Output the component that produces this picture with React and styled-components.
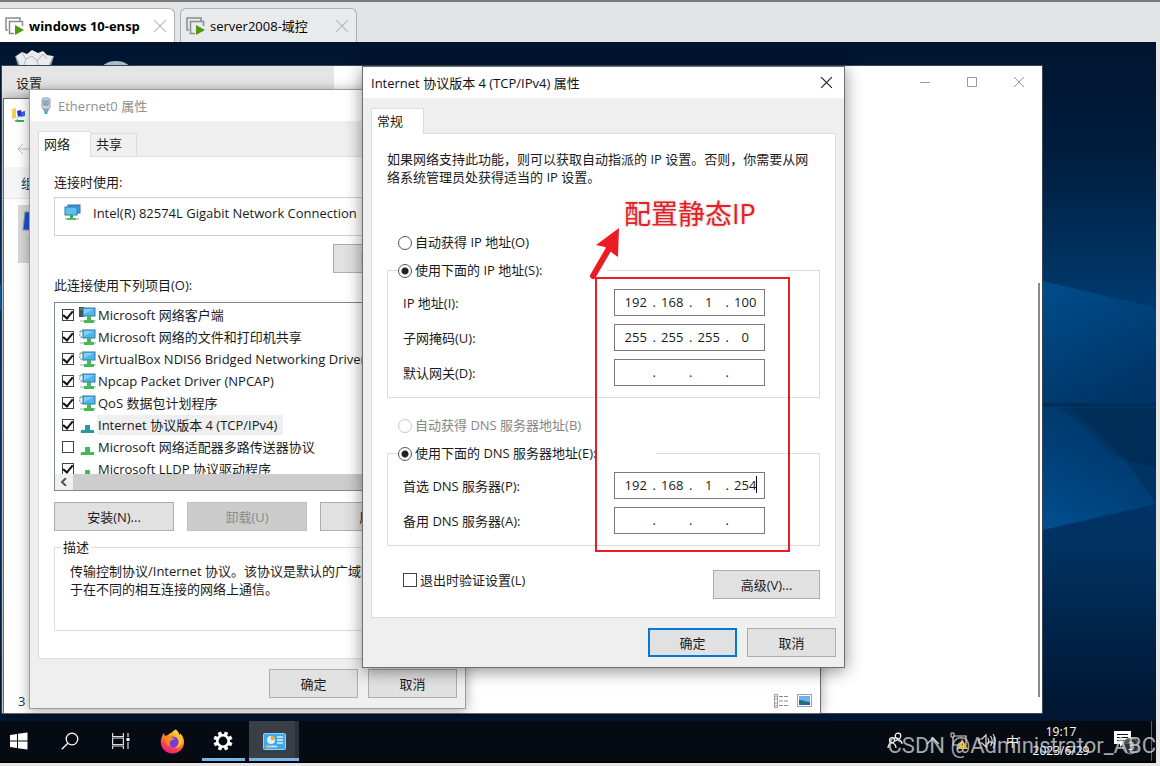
import React from 'react';
import styled, { createGlobalStyle, css } from 'styled-components';

const GlobalStyle = createGlobalStyle`
  * {
    box-sizing: border-box;
  }

  body {
    margin: 0;
    background: #e3e4e6;
  }

  body, button, input {
    font-family: 'Open Sans', 'Noto Sans CJK SC', sans-serif;
    font-size: 13px;
    line-height: 18px;
    color: #1a1a1a;
  }
`;

/* ---------- VM tab strip ---------- */

const Page = styled.div`
  display: flex;
  flex-direction: column;
  height: 100vh;
  overflow: hidden;
  padding: 0 4px 3px 0;
  background: #e6e6e7;
`;

const TabStrip = styled.nav`
  display: flex;
  align-items: flex-end;
  gap: 5px;
  height: 42px;
  flex: none;
  margin-right: -4px;
  background: #e3e4e6;
  box-shadow: inset 0 2px 0 #77797b;
`;

const VmTab = styled.div`
  display: flex;
  align-items: center;
  gap: 5px;
  width: ${({ $active }) => ($active ? '175px' : '177px')};
  height: 34px;
  padding: 0 7px 0 5px;
  border: 1px solid #adafb1;
  border-bottom: 0;
  border-left-width: ${({ $active }) => ($active ? '0' : '1px')};
  border-radius: ${({ $active }) => ($active ? '0 6px 0 0' : '6px 6px 0 0')};
  background: ${({ $active }) => ($active ? '#fff' : '#e9eaec')};
`;

const VmTabTitle = styled.a`
  flex: 1;
  color: #000;
  font-size: 13px;
  font-weight: ${({ $active }) => ($active ? 700 : 400)};
  text-decoration: none;
  white-space: nowrap;
`;

const IconButton = styled.button`
  display: flex;
  align-items: center;
  justify-content: center;
  padding: 0;
  border: 0;
  background: none;
  color: ${({ $color }) => $color || '#1a1a1a'};
`;

/* ---------- Desktop and windows ---------- */

const Desktop = styled.main`
  position: relative;
  display: flex;
  flex-direction: column;
  justify-content: flex-end;
  flex: 1;
  min-height: 0;
  overflow: hidden;
  background: #001a38;
`;

const Wallpaper = styled.svg`
  position: absolute;
  inset: 0;
  width: 100%;
  height: 100%;
`;

const DesktopIcons = styled.svg`
  position: absolute;
  left: 14px;
  top: 7px;
`;

const Window = styled.section`
  position: absolute;
  left: ${({ $x }) => $x}px;
  top: ${({ $y }) => $y}px;
  width: ${({ $w }) => $w}px;
  border: 1px solid ${({ $border }) => $border || '#8a8a8a'};
  background: ${({ $bg }) => $bg || '#fff'};
  box-shadow: ${({ $shadow }) => $shadow || 'none'};
`;

const SettingsBody = styled.div`
  display: flex;
  justify-content: space-between;
  height: 647px;
  background: linear-gradient(90deg, #e5e5e5 332px, #fff 332px);
`;

const SettingsTitle = styled.h2`
  margin: 0;
  padding: 8px 14px;
  font-size: 13px;
  font-weight: 400;
`;

const SettingsSide = styled.div`
  display: flex;
  flex-direction: column;
  justify-content: space-between;
  align-items: flex-end;
  padding-bottom: 16px;
`;

const CaptionButtons = styled.div`
  display: flex;
  padding-top: 8px;

  button {
    width: 47px;
    height: 16px;
  }
`;

const ScrollThumb = styled.div`
  width: 2px;
  height: 414px;
  margin-right: 2px;
  background: #8b8b8b;
`;

const ExplorerBody = styled.div`
  display: flex;
  flex-direction: column;
  height: 614px;
`;

const ExplorerRow = styled.div`
  display: flex;
  align-items: center;
  flex: none;
  height: ${({ $h }) => $h}px;
  padding: 0 7px;
`;

const ExplorerBar = styled(ExplorerRow)`
  padding: 0 17px;
  border-bottom: 1px solid #e3e6ea;
  background: #f5f6f8;
  color: #1e395b;
`;

const ConnectionTile = styled.div`
  display: flex;
  align-items: flex-start;
  width: 200px;
  height: 58px;
  margin: 6px 0 0 14px;
  padding: 6px 4px;
  background: #d9d9d9;
`;

const StatusBar = styled.div`
  display: flex;
  align-items: center;
  justify-content: space-between;
  height: 24px;
  margin-top: auto;
  padding: 0 8px 0 14px;
  color: #1e395b;
`;

const ViewIcons = styled.div`
  display: flex;
  gap: 8px;
`;

const TitleBar = styled.header`
  display: flex;
  align-items: center;
  gap: 4px;
  height: 31px;
  padding: 0 11px 0 8px;
  background: #fff;
  color: ${({ $inactive }) => ($inactive ? '#8f8f8f' : '#111')};

  h2 {
    flex: 1;
    margin: 0;
    font-size: 13px;
    font-weight: 400;
  }
`;

const DialogBody = styled.div`
  padding: 10px 8px;
  background: #efefef;
`;

const TabList = styled.div`
  display: flex;
  align-items: flex-end;
  height: 25px;
`;

const DialogTab = styled.button`
  z-index: 1;
  width: ${({ $active }) => ($active ? '53px' : '46px')};
  height: ${({ $active }) => ($active ? '26px' : '23px')};
  margin-bottom: ${({ $active }) => ($active ? '-1px' : '0')};
  padding: 0 0 2px 5px;
  border: 1px solid #dcdcdc;
  border-bottom: 0;
  border-left-width: ${({ $active }) => ($active ? '1px' : '0')};
  background: ${({ $active }) => ($active ? '#fff' : '#f0f0f0')};
  text-align: left;
`;

const Panel = styled.div`
  padding: 16px 15px ${({ $bottom }) => $bottom}px;
  border: 1px solid #dcdcdc;
  background: #fff;
`;

const Footer = styled.footer`
  display: flex;
  justify-content: flex-end;
  gap: 10px;
  margin-top: 10px;
`;

const Button = styled.button`
  width: ${({ $w }) => $w || 89}px;
  height: 29px;
  padding: 0;
  border: 1px solid #adadad;
  background: #e1e1e1;
  overflow: hidden;

  ${({ $primary }) => $primary && css`
    border: 2px solid #0078d7;
  `}

  &:disabled {
    border-color: #bfbfbf;
    background: #ccc;
    color: #8b8b8b;
  }
`;

const Text = styled.p`
  margin: ${({ $top }) => $top || 0}px 0 0;
  white-space: nowrap;
`;

/* ---------- Ethernet0 dialog ---------- */

const AdapterBox = styled.div`
  display: flex;
  gap: 12px;
  height: 39px;
  margin-top: 6px;
  padding: 6px 9px;
  border: 1px solid #cfcfcf;
  white-space: nowrap;
`;

const ConfigureRow = styled.div`
  display: flex;
  justify-content: flex-end;
  margin-top: 8px;
`;

const ItemBox = styled.div`
  display: flex;
  flex-direction: column;
  height: 189px;
  margin-top: 8px;
  border: 1px solid #828790;
`;

const ItemList = styled.ul`
  flex: 1;
  min-height: 0;
  margin: 0;
  padding: 1px 0 0 7px;
  overflow: hidden;
  list-style: none;
`;

const Item = styled.li`
  display: flex;
  align-items: center;
  height: 22px;
  white-space: nowrap;

  label {
    display: flex;
    align-items: center;
  }

  svg {
    margin: 0 1px 0 5px;
  }

  span {
    padding: 1px 6px 1px 1px;
    background: ${({ $selected }) => ($selected ? '#efefef' : 'none')};
  }
`;

const ScrollBar = styled.div`
  display: flex;
  height: 16px;
  background: #f0f0f0;

  button {
    width: 18px;
  }

  div {
    flex: 1;
    background: #cdcdcd;
  }
`;

const ActionRow = styled.div`
  display: flex;
  gap: 13px;
  margin-top: 11px;
`;

const DescriptionGroup = styled.fieldset`
  margin: 7px 0 0;
  padding: 6px 15px 32px;
  border: 1px solid #dcdcdc;

  legend {
    margin-left: -9px;
    padding: 0 2px;
  }
`;

/* ---------- TCP/IPv4 dialog ---------- */

const Check = styled.input.attrs({ type: 'checkbox' })`
  appearance: none;
  display: grid;
  place-items: center;
  flex: none;
  width: ${({ $size }) => $size || 12}px;
  height: ${({ $size }) => $size || 12}px;
  margin: 0;
  border: 1px solid #444;
  background: #fff;

  &:checked::after {
    content: '';
    width: 4px;
    height: 8px;
    margin-top: -2px;
    border: solid #111;
    border-width: 0 2px 2px 0;
    transform: rotate(40deg);
  }
`;

const Radio = styled.input.attrs({ type: 'radio' })`
  appearance: none;
  flex: none;
  width: 14px;
  height: 14px;
  margin: 2px 0 0;
  border: 1px solid #555;
  border-radius: 50%;
  background: #fff;

  &:checked {
    background: radial-gradient(circle, #222 3px, #fff 4px);
  }

  &:disabled {
    border-color: #c8c8c8;
  }
`;

const Choice = styled.label`
  display: flex;
  align-items: center;
  gap: 3px;
  height: 20px;
  margin-top: ${({ $top }) => $top || 0}px;
  padding-left: ${({ $indent }) => $indent || 0}px;
  color: ${({ $disabled }) => ($disabled ? '#858585' : '#1a1a1a')};
  white-space: nowrap;
`;

const AddressGroup = styled.fieldset`
  display: flex;
  flex-direction: column;
  gap: 8px;
  margin: 8px 0 0;
  padding: 9px 15px 11px;
  border: 1px solid #dcdcdc;

  legend {
    width: ${({ $legend }) => $legend}px;
    margin-left: -5px;
    padding: 0;
  }
`;

const Field = styled.div`
  display: grid;
  grid-template-columns: 211px 151px;
  align-items: center;
`;

const IpBox = styled.div`
  position: relative;
  display: flex;
  height: 27px;
  padding: 2px 2px 3px 4px;
  border: 1px solid #7a7a7a;
  background: #fff;

  span {
    width: 3px;
    text-align: center;
    line-height: 21px;
  }
`;

const Octet = styled.input`
  flex: 1;
  min-width: 0;
  padding: 0;
  border: 0;
  outline: 0;
  background: none;
  text-align: center;
`;

const Caret = styled.i`
  position: absolute;
  top: 3px;
  right: 7px;
  width: 1px;
  height: 17px;
  background: #000;
`;

const BottomRow = styled.div`
  display: flex;
  justify-content: space-between;
  margin-top: 24px;
`;

/* ---------- Red marks over the dialogs ---------- */

const MarkBox = styled.div`
  position: absolute;
  left: 595px;
  top: 235px;
  width: 195px;
  height: 275px;
  border: 2px solid #ed1c24;
`;

const MarkArrow = styled.svg`
  position: absolute;
  left: 585px;
  top: 183px;
`;

const MarkText = styled.div`
  position: absolute;
  left: 624px;
  top: 153px;
  color: #ed1c24;
  font-size: 27px;
  line-height: 38px;
  text-shadow: 0 0 3px #bbb;
`;

/* ---------- Taskbar ---------- */

const Taskbar = styled.div`
  position: relative;
  display: flex;
  gap: 1px;
  height: 42px;
  flex: none;
  border-bottom: 2px solid #000;
  background: #060b13;
`;

const TaskButton = styled.button`
  display: flex;
  align-items: center;
  justify-content: center;
  width: ${({ $start }) => ($start ? 38 : 50)}px;
  margin-right: ${({ $start }) => ($start ? 6 : 0)}px;
  padding: 0;
  border: 0;
  background: none;

  ${({ $open }) => $open && css`
    background: linear-gradient(#76b9ed, #76b9ed) center bottom / 43px 3px no-repeat;
  `}

  ${({ $active }) => $active && css`
    background: linear-gradient(90deg, #3a3e45 46px, #2c3037 46px);
    box-shadow: inset 0 -3px 0 #76b9ed;
  `}
`;

const Tray = styled.div`
  display: flex;
  align-items: center;
  margin-left: auto;
  gap: 10px;
  color: #fff;
`;

const Clock = styled.time`
  width: 64px;
  margin-right: 9px;
  font-size: 12px;
  line-height: 19px;
  text-align: center;
`;

const ShowDesktop = styled.button`
  width: 5px;
  height: 100%;
  margin-left: 1px;
  padding: 0;
  border: 0;
  border-left: 1px solid #555a60;
  background: none;
`;

const Watermark = styled.div`
  position: absolute;
  right: 0;
  bottom: 0;
  color: rgba(220, 220, 220, 0.75);
  font-family: Roboto, sans-serif;
  font-size: 22px;
  line-height: 30px;
  white-space: nowrap;
`;

/* ---------- Icons ---------- */

const VmIcon = () => (
  <svg width="19" height="18" viewBox="0 0 19 18">
    <path d="M3 13H1V1h14v3" fill="none" stroke="#8b8b8b" strokeWidth="1.5" />
    <path d="M9 16.5H4.5v-12h13V9" fill="none" stroke="#8b8b8b" strokeWidth="1.5" />
    <path d="M10 8l9 5-9 5z" fill="#4a9a12" />
  </svg>
);

const Cross = ({ size = 12, width = 1 }) => (
  <svg width={size} height={size} viewBox="0 0 12 12" stroke="currentColor" strokeWidth={width}>
    <path d="M1 1l10 10M11 1L1 11" />
  </svg>
);

const EthernetIcon = () => (
  <svg width="16" height="18" viewBox="0 0 16 18">
    <rect x="4" y="1" width="8" height="11" rx="2" fill="#c9d3de" stroke="#8fa0b3" />
    <path d="M6 3v5h4V3M8 3v4" fill="none" stroke="#6d7f95" />
    <path d="M5 12h6l-1 3H6z" fill="#7fa7c4" />
    <path d="M6.500 15h3v2h-3z" fill="#35b0d6" />
  </svg>
);

const AdapterIcon = () => (
  <svg width="17" height="17" viewBox="0 0 17 17">
    <rect x="4" y="1" width="12" height="8" fill="#3f9fdb" stroke="#2d6f9f" />
    <rect x="1" y="3" width="12" height="8" fill="#5cc0f5" stroke="#3579a5" />
    <path d="M6 11h3v3H6z" fill="#37a64b" />
    <path d="M3 14h9v2H3z" fill="#49c45c" />
    <path d="M1 14h2v2H1zM12 14h3v2h-3z" fill="#c9cfd4" />
  </svg>
);

const ServiceIcon = ({ client }) => (
  <svg width="17" height="18" viewBox="0 0 17 18">
    {client ? (
      <path d="M0 1h5v10H0z" fill="#4b5257" />
    ) : (
      <circle cx="4" cy="6" r="3.500" fill="none" stroke="#a9b1b8" strokeWidth="2" strokeDasharray="2 1" />
    )}
    <path d="M1 3h3" stroke="#54c06a" />
    <rect x="4" y="2" width="12" height="8" fill="#4db5f2" stroke="#3579a5" />
    <path d="M5 3h10L5 8z" fill="#7fd0fb" />
    <path d="M8 10h4v4H8z" fill="#46b857" />
    <path d="M5 14h10v3H5z" fill="#46b857" />
    <path d="M1 14h4v2H1zM15 14h2v2h-2z" fill="#d0d4d8" />
  </svg>
);

const ProtocolIcon = ({ color }) => (
  <svg width="17" height="18" viewBox="0 0 17 18">
    <path d="M6 9h5v5H6z" fill={color} />
    <path d="M2 14h13v3H2z" fill={color} />
    <path d="M1 16h15" stroke={color} strokeOpacity="0.500" />
  </svg>
);

const DotIcon = () => (
  <svg width="17" height="18" viewBox="0 0 17 18">
    <rect x="6" y="10" width="5" height="5" rx="1" fill="#46b857" />
  </svg>
);

const NetworkFolderIcon = () => (
  <svg width="16" height="16" viewBox="0 0 16 16">
    <path d="M1 2l4-1v10l-4 1z" fill="#efd05b" />
    <path d="M6 4l4-1 1 6-4 1z" fill="#1b33c8" />
    <path d="M5 10l6-1 1 1-6 1z" fill="#c3cbd8" />
    <path d="M10 5l4-1v5l-4 1z" fill="#3c63e6" />
    <path d="M3 14l4-2v1h6v2H7z" fill="#2fae55" />
  </svg>
);

const ListViewIcon = () => (
  <svg width="16" height="14" viewBox="0 0 16 14">
    <path d="M1.500 .5h3v13h-3zM1.500 5h3M1.500 9h3" fill="none" stroke="#9b9b9b" />
    <path d="M6 2.500h4m1 0h4M6 7h4m1 0h4M6 11.500h4m1 0h4" stroke="#8b8b8b" />
    <path d="M2.500 2h1v1h-1zM2.500 11h1v1h-1z" fill="#c0392b" />
  </svg>
);

const ThumbViewIcon = () => (
  <svg width="15" height="13" viewBox="0 0 15 13">
    <rect x=".5" y=".5" width="14" height="12" fill="#fff" stroke="#9aa5b0" />
    <path d="M2 2h11v9H2z" fill="#69b4ee" />
    <path d="M2 6c4 0 7 2 11 2v3H2z" fill="#276b7c" />
    <path d="M2 10h11v1H2z" fill="#2b63a8" />
  </svg>
);

const StartIcon = () => (
  <svg width="18" height="18" viewBox="0 0 18 18" fill="#fff">
    <path d="M0 3l7-1v6.500H0zM8 1.800L17.500 .5v8H8zM0 9.500h7V16l-7-1zM8 9.500h9.500v8L8 16.200z" />
  </svg>
);

const SearchIcon = () => (
  <svg width="18" height="18" viewBox="0 0 18 18" fill="none" stroke="#fff" strokeWidth="1.300">
    <circle cx="11" cy="7" r="5.800" />
    <path d="M6.800 11.200L.8 17.200" />
  </svg>
);

const TaskViewIcon = () => (
  <svg width="18" height="18" viewBox="0 0 18 18" fill="none" stroke="#ddd" strokeWidth="1.200">
    <path d="M.6 1v3.500h10.800V1M.6 6v6.500h10.800V6zM.6 17v-3h10.800v3M16 1v4M16 10v7" />
    <path d="M14.500 6h3v3h-3z" fill="#fff" stroke="none" />
  </svg>
);

const FirefoxIcon = () => (
  <svg width="25" height="25" viewBox="0 0 25 25">
    <defs>
      <linearGradient id="ff" x1="0.800" y1="0" x2="0.300" y2="1">
        <stop offset="0" stopColor="#fff04a" />
        <stop offset="0.400" stopColor="#ff9420" />
        <stop offset="0.750" stopColor="#ff3c4f" />
        <stop offset="1" stopColor="#e01f8d" />
      </linearGradient>
    </defs>
    <path d="M16 .5c2 2 3 3.500 3.500 5.500l1-1.500c2.500 3 3.800 6 3.500 9.500C23.500 20 18.500 24.500 12.500 24.500S1 20 .8 13.500C.6 10 2 6.500 4 4l.8 3L8 6c1-1 2-2 4-2.500C13 2 14 1 16 .5z" fill="url(#ff)" />
    <circle cx="13" cy="13" r="5.500" fill="#6b3fe0" />
    <path d="M4 8c3-2 6-1 8 .5l3 1.500c-2 1-4 1-5 2.500-1 2 0 4 2 5-4 0-6.500-3-6.500-6z" fill="#ff8a1e" />
    <path d="M14 5c3 1 5 4 5 8 0 3-2 5-4 6 5 0 7-4 7-8-1-3-4-6-8-6z" fill="#ffc52f" />
  </svg>
);

const teeth = [0, 45, 90, 135, 180, 225, 270, 315];

const GearIcon = () => (
  <svg width="20" height="20" viewBox="0 0 20 20" fill="#fff">
    <circle cx="10" cy="10" r="5.700" fill="none" stroke="#fff" strokeWidth="2.600" />
    {teeth.map((angle) => (
      <rect key={angle} x="8.200" y="0.500" width="3.600" height="3.500" transform={`rotate(${angle + 22} 10 10)`} />
    ))}
  </svg>
);

const ControlPanelIcon = () => (
  <svg width="23" height="17" viewBox="0 0 23 17">
    <rect x=".5" y=".5" width="22" height="16" rx="1" fill="#3fa9ec" stroke="#8bd3fb" />
    <circle cx="8" cy="7" r="4" fill="#d9f0fd" />
    <path d="M8 7V3a4 4 0 0 1 4 4z" fill="#f6a623" />
    <path d="M14 4h6M14 7h6M14 10h6M4 13.500h10" stroke="#d9f0fd" strokeWidth="1.500" />
    <path d="M3 13.500h5" stroke="#f6c15a" strokeWidth="1.500" />
  </svg>
);

const PeopleIcon = () => (
  <svg width="16" height="18" viewBox="0 0 16 18" fill="none" stroke="#fff" strokeWidth="1.200">
    <circle cx="11" cy="4" r="2.800" />
    <circle cx="5" cy="8" r="2.500" />
    <path d="M1 16c0-3 2-5 4-5s4 2 4 5M8 9c3-2 7-1 7 3" />
  </svg>
);

const ChevronIcon = () => (
  <svg width="27" height="10" viewBox="0 0 27 10" fill="none" stroke="#ddd" strokeWidth="1.200">
    <path d="M14 8l6-6 6 6" />
  </svg>
);

const NetworkWarnIcon = () => (
  <svg width="18" height="18" viewBox="0 0 18 18">
    <path d="M3 4h13v9H3zM7 16h5" fill="none" stroke="#ddd" strokeWidth="1.200" />
    <path d="M1 1h3v4H1z" fill="#060b13" stroke="#ddd" />
    <path d="M12 7l6 10H7z" fill="#f5b921" />
    <path d="M12.500 11v3M12.500 15v1" stroke="#222" />
  </svg>
);

const VolumeIcon = () => (
  <svg width="18" height="16" viewBox="0 0 18 16" fill="none" stroke="#ddd" strokeWidth="1.200">
    <path d="M1 6h3l4-4v12l-4-4H1zM10 5c1 2 1 4 0 6M12.500 3c2 3 2 7 0 10M15 1c3 4 3 10 0 14" />
  </svg>
);

const NoticeIcon = () => (
  <svg width="28" height="28" viewBox="0 0 28 28">
    <path d="M2 4h17v13h-8l-3 3v-3H2z" fill="#fff" />
    <path d="M5 7.500h11M5 10.500h11M5 13.500h7" stroke="#111" />
    <circle cx="18.500" cy="19" r="8" fill="#33373d" fillOpacity="0.850" stroke="#8a8d91" />
    <text x="16" y="23" fontSize="11" fill="#fff">3</text>
  </svg>
);

/* ---------- Parts ---------- */

const IpField = ({ id, label, octets = ['', '', '', ''], focused }) => (
  <Field>
    <label htmlFor={id}>{label}</label>
    <IpBox>
      {octets.map((octet, i) => (
        <React.Fragment key={i}>
          {i > 0 && <span>.</span>}
          <Octet id={i === 0 ? id : undefined} aria-label={`${label} ${i + 1}`} defaultValue={octet} />
        </React.Fragment>
      ))}
      {focused && <Caret />}
    </IpBox>
  </Field>
);

const items = [
  { name: 'Microsoft 网络客户端', checked: true, icon: <ServiceIcon client /> },
  { name: 'Microsoft 网络的文件和打印机共享', checked: true, icon: <ServiceIcon /> },
  { name: 'VirtualBox NDIS6 Bridged Networking Driver', checked: true, icon: <ServiceIcon /> },
  { name: 'Npcap Packet Driver (NPCAP)', checked: true, icon: <ServiceIcon /> },
  { name: 'QoS 数据包计划程序', checked: true, icon: <ServiceIcon /> },
  { name: 'Internet 协议版本 4 (TCP/IPv4)', checked: true, selected: true, icon: <ProtocolIcon color="#2a9aa0" /> },
  { name: 'Microsoft 网络适配器多路传送器协议', checked: false, icon: <ProtocolIcon color="#46b857" /> },
  { name: 'Microsoft LLDP 协议驱动程序', checked: true, icon: <DotIcon /> },
];

const SettingsWindow = () => (
  <Window $x={1} $y={23} $w={1042} $border="#3b4654">
    <SettingsBody>
      <SettingsTitle>设置</SettingsTitle>
      <SettingsSide>
        <CaptionButtons>
          <IconButton $color="#999" aria-label="最小化">
            <svg width="12" height="12" stroke="currentColor"><path d="M1 6.500h10" /></svg>
          </IconButton>
          <IconButton $color="#999" aria-label="最大化">
            <svg width="12" height="12" fill="none" stroke="currentColor"><path d="M1.500 1.500h9v9h-9z" /></svg>
          </IconButton>
          <IconButton $color="#999" aria-label="关闭"><Cross /></IconButton>
        </CaptionButtons>
        <ScrollThumb />
      </SettingsSide>
    </SettingsBody>
  </Window>
);

const ConnectionsWindow = () => (
  <Window $x={3} $y={56} $w={818} $border="#6b6b6b" $shadow="0 0 12px rgba(0, 0, 0, 0.35)">
    <ExplorerBody>
      <ExplorerRow $h={31}><NetworkFolderIcon /></ExplorerRow>
      <ExplorerRow $h={37}>
        <svg width="20" height="12" viewBox="-6 0 20 12" fill="none" stroke="#bbb"><path d="M14 6H1M6 1L1 6l5 5" /></svg>
      </ExplorerRow>
      <ExplorerBar $h={32}>组织</ExplorerBar>
      <ConnectionTile>
        <svg width="30" height="30" viewBox="0 0 30 30">
          <path d="M3 1h20v18H1z" fill="#1f4fd6" stroke="#8796ad" />
          <path d="M6 28h14" stroke="#aaa" />
        </svg>
      </ConnectionTile>
      <StatusBar>
        <span>3 个项目</span>
        <ViewIcons>
          <ListViewIcon />
          <ThumbViewIcon />
        </ViewIcons>
      </StatusBar>
    </ExplorerBody>
  </Window>
);

const EthernetDialog = () => (
  <Window $x={29} $y={47} $w={437} $border="#9d9d9d" $shadow="0 2px 12px rgba(0, 0, 0, 0.35)">
    <TitleBar $inactive>
      <EthernetIcon />
      <h2>Ethernet0 属性</h2>
    </TitleBar>
    <DialogBody>
      <TabList>
        <DialogTab $active>网络</DialogTab>
        <DialogTab>共享</DialogTab>
      </TabList>
      <Panel $bottom={27}>
        <Text>连接时使用:</Text>
        <AdapterBox>
          <AdapterIcon />
          Intel(R) 82574L Gigabit Network Connection
        </AdapterBox>
        <ConfigureRow>
          <Button $w={108}>配置(C)...</Button>
        </ConfigureRow>
        <Text $top={3}>此连接使用下列项目(O):</Text>
        <ItemBox>
          <ItemList>
            {items.map((item) => (
              <Item key={item.name} $selected={item.selected}>
                <label>
                  <Check defaultChecked={item.checked} />
                  {item.icon}
                  <span>{item.name}</span>
                </label>
              </Item>
            ))}
          </ItemList>
          <ScrollBar>
            <IconButton aria-label="向左滚动">
              <svg width="8" height="8" fill="none" stroke="#555" strokeWidth="2"><path d="M6 0L2 4l4 4" /></svg>
            </IconButton>
            <div />
          </ScrollBar>
        </ItemBox>
        <ActionRow>
          <Button $w={120}>安装(N)...</Button>
          <Button $w={120} disabled>卸载(U)</Button>
          <Button $w={120}>属性(R)</Button>
        </ActionRow>
        <DescriptionGroup>
          <legend>描述</legend>
          <Text>
            传输控制协议/Internet 协议。该协议是默认的广域网
            <br />
            于在不同的相互连接的网络上通信。
          </Text>
        </DescriptionGroup>
      </Panel>
      <Footer>
        <Button>确定</Button>
        <Button>取消</Button>
      </Footer>
    </DialogBody>
  </Window>
);

const Ipv4Dialog = () => (
  <Window $x={362} $y={24} $w={483} $border="#6f6f6f" $shadow="0 3px 16px rgba(0, 0, 0, 0.45)">
    <TitleBar>
      <h2>Internet 协议版本 4 (TCP/IPv4) 属性</h2>
      <IconButton aria-label="关闭"><Cross size={13} /></IconButton>
    </TitleBar>
    <DialogBody>
      <TabList>
        <DialogTab $active>常规</DialogTab>
      </TabList>
      <Panel $bottom={18}>
        <Text>
          如果网络支持此功能，则可以获取自动指派的 IP 设置。否则，你需要从网
          <br />
          络系统管理员处获得适当的 IP 设置。
        </Text>
        <Choice $top={46} $indent={11}>
          <Radio name="ip" />
          自动获得 IP 地址(O)
        </Choice>
        <AddressGroup $legend={209}>
          <legend>
            <Choice>
              <Radio name="ip" defaultChecked />
              使用下面的 IP 地址(S):
            </Choice>
          </legend>
          <IpField id="ip-address" label="IP 地址(I):" octets={['192', '168', '1', '100']} />
          <IpField id="subnet" label="子网掩码(U):" octets={['255', '255', '255', '0']} />
          <IpField id="gateway" label="默认网关(D):" />
        </AddressGroup>
        <Choice $top={17} $indent={11} $disabled>
          <Radio name="dns" disabled />
          自动获得 DNS 服务器地址(B)
        </Choice>
        <AddressGroup $legend={258}>
          <legend>
            <Choice>
              <Radio name="dns" defaultChecked />
              使用下面的 DNS 服务器地址(E):
            </Choice>
          </legend>
          <IpField id="dns-first" label="首选 DNS 服务器(P):" octets={['192', '168', '1', '254']} focused />
          <IpField id="dns-second" label="备用 DNS 服务器(A):" />
        </AddressGroup>
        <BottomRow>
          <Choice $indent={16}>
            <Check $size={14} />
            退出时验证设置(L)
          </Choice>
          <Button $w={107}>高级(V)...</Button>
        </BottomRow>
      </Panel>
      <Footer>
        <Button $primary>确定</Button>
        <Button>取消</Button>
      </Footer>
    </DialogBody>
  </Window>
);

const App = () => {
  return (
    <Page>
      <GlobalStyle />
      <TabStrip>
        <VmTab $active>
          <VmIcon />
          <VmTabTitle href="#win10" $active>windows 10-ensp</VmTabTitle>
          <IconButton $color="#b9b9b9" aria-label="关闭"><Cross size={14} /></IconButton>
        </VmTab>
        <VmTab>
          <VmIcon />
          <VmTabTitle href="#server">server2008-域控</VmTabTitle>
          <IconButton $color="#b9b9b9" aria-label="关闭"><Cross size={14} /></IconButton>
        </VmTab>
      </TabStrip>

      <Desktop>
        <Wallpaper viewBox="0 0 1156 721" preserveAspectRatio="none">
          <defs>
            <linearGradient id="sky" x1="0" y1="0" x2="0" y2="1">
              <stop offset="0" stopColor="#00142f" />
              <stop offset="0.150" stopColor="#001d3d" />
              <stop offset="0.350" stopColor="#00386b" />
              <stop offset="0.700" stopColor="#003262" />
              <stop offset="0.920" stopColor="#001733" />
              <stop offset="1" stopColor="#001530" />
            </linearGradient>
            <linearGradient id="beamDown" x1="0" y1="0" x2="0.500" y2="1">
              <stop offset="0" stopColor="#004d8c" />
              <stop offset="1" stopColor="#004d8c" stopOpacity="0" />
            </linearGradient>
            <linearGradient id="beamUp" x1="0" y1="1" x2="0.500" y2="0">
              <stop offset="0" stopColor="#004f90" />
              <stop offset="1" stopColor="#004f90" stopOpacity="0" />
            </linearGradient>
          </defs>
          <rect width="1156" height="721" fill="url(#sky)" />
          <path d="M1043 239l113 27v94h-113z" fill="url(#beamDown)" />
          <path d="M1060 366h96v60l-40-10-30-30z" fill="#002a50" fillOpacity="0.600" />
          <path d="M1043 365h30l50 50 33 47-113 26z" fill="url(#beamUp)" />
          <path d="M1043 363h113" stroke="#002a52" strokeWidth="3" strokeOpacity="0.700" />
          <path d="M0 243h4v25H0z" fill="#0a63b0" />
        </Wallpaper>
        <DesktopIcons width="130" height="20" viewBox="0 0 130 20">
          <path d="M1 7h39l-4 13H5z" fill="#9aa0a5" />
          <path d="M2 7l6-4 5 2 5-4 6 3 5-2 4 4 6 1-4 9H6z" fill="#e9ebec" />
          <path d="M8 4l4 6 6-3 5 5 6-7 4 5M12 10l-2 6M23 12l2 5" stroke="#aeb4b8" fill="none" />
          <ellipse cx="102" cy="23" rx="16" ry="11" fill="#a9bcc8" />
        </DesktopIcons>

        <SettingsWindow />
        <ConnectionsWindow />
        <EthernetDialog />
        <Ipv4Dialog />

        <MarkBox />
        <MarkArrow width="40" height="60" viewBox="0 0 40 60">
          <path d="M8 51L26 20" stroke="#ed1c24" strokeWidth="6" strokeLinecap="round" />
          <path d="M34 3L11 20l9 2 10 8 3 2z" fill="#ed1c24" />
        </MarkArrow>
        <MarkText>配置静态IP</MarkText>

        <Taskbar>
          <TaskButton $start aria-label="开始"><StartIcon /></TaskButton>
          <TaskButton aria-label="搜索"><SearchIcon /></TaskButton>
          <TaskButton aria-label="任务视图"><TaskViewIcon /></TaskButton>
          <TaskButton aria-label="Firefox"><FirefoxIcon /></TaskButton>
          <TaskButton $open aria-label="设置"><GearIcon /></TaskButton>
          <TaskButton $active aria-label="控制面板"><ControlPanelIcon /></TaskButton>
          <Tray>
            <PeopleIcon />
            <ChevronIcon />
            <NetworkWarnIcon />
            <VolumeIcon />
            <span>中</span>
            <Clock>19:17<br />2023/6/29</Clock>
            <NoticeIcon />
            <ShowDesktop aria-label="显示桌面" />
          </Tray>
          <Watermark>CSDN @Administrator_ABC</Watermark>
        </Taskbar>
      </Desktop>
    </Page>
  );
};

export default App;
